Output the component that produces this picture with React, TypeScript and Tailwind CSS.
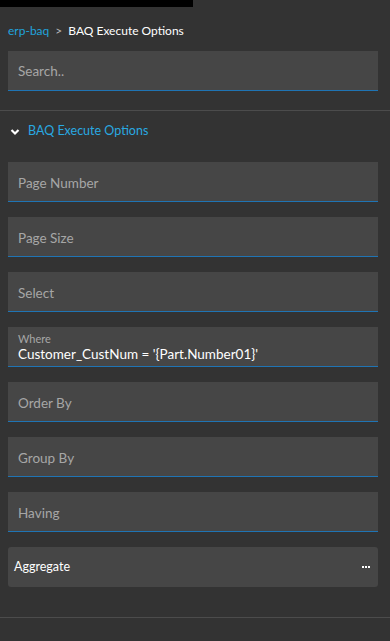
import React from "react";

const Field = ({ label }: { label: string }) => (
  <div className="h-[40px] bg-[#464646] border-b border-[#1f74b4] flex items-center px-[10px] pt-[4px] text-[13.5px] text-[#a6a6a6]">
    {label}
  </div>
);

export default function App() {
  return (
    <div className="w-[390px] h-[641px] bg-[#333333] overflow-hidden" style={{ fontFamily: "Lato, 'Open Sans', sans-serif" }}>
      <div className="h-[7px] w-[193px] bg-black" />
      <div className="pl-[8px] pt-[15px] h-[44px] flex items-start text-[12px]">
        <span className="text-[#21a3dc]">erp-baq</span>
        <span className="text-[#b8b8b8] mx-[6px]">&gt;</span>
        <span className="text-white">BAQ Execute Options</span>
      </div>
      <div className="pl-[8px] pr-[12px]">
        <div className="h-[40px] bg-[#464646] border-b border-[#1f74b4] flex items-center px-[10px] pt-[2px] text-[13.5px] text-[#a6a6a6]">
          Search..
        </div>
      </div>
      <div className="h-[19px]" />
      <div className="border-t border-[#4c4c4c]" />
      <div className="h-[40px] flex items-center px-[10px] pt-[1px]">
        <svg width="10" height="8" viewBox="0 0 10 8" className="mr-[8px]">
          <path d="M1.5 2 L5 5.5 L8.5 2" stroke="white" strokeWidth="2.2" fill="none" />
        </svg>
        <span className="text-[12.5px] text-[#29a9e1]">BAQ Execute Options</span>
      </div>
      <div className="pl-[8px] pr-[12px] pt-[11px] flex flex-col gap-[15px]">
        <Field label="Page Number" />
        <Field label="Page Size" />
        <Field label="Select" />
        <div className="h-[40px] bg-[#464646] border-b border-[#1f74b4] flex flex-col justify-center px-[10px] pt-[1px]">
          <div className="text-[11px] text-[#a6a6a6] leading-[14px]">Where</div>
          <div className="text-[13.5px] text-white leading-[17px]">Customer_CustNum = '{"{"}Part.Number01{"}"}'</div>
        </div>
        <Field label="Order By" />
        <Field label="Group By" />
        <Field label="Having" />
        <div className="h-[40px] bg-[#464646] rounded-[3px] flex items-center justify-between pl-[6px] pr-[8px]">
          <span className="text-[12.5px] text-white">Aggregate</span>
          <span className="flex gap-[1px]">
            <span className="w-[2px] h-[2px] bg-white" />
            <span className="w-[2px] h-[2px] bg-white" />
            <span className="w-[2px] h-[2px] bg-white" />
          </span>
        </div>
      </div>
      <div className="h-[30px]" />
      <div className="border-t border-[#4c4c4c]" />
    </div>
  );
}
